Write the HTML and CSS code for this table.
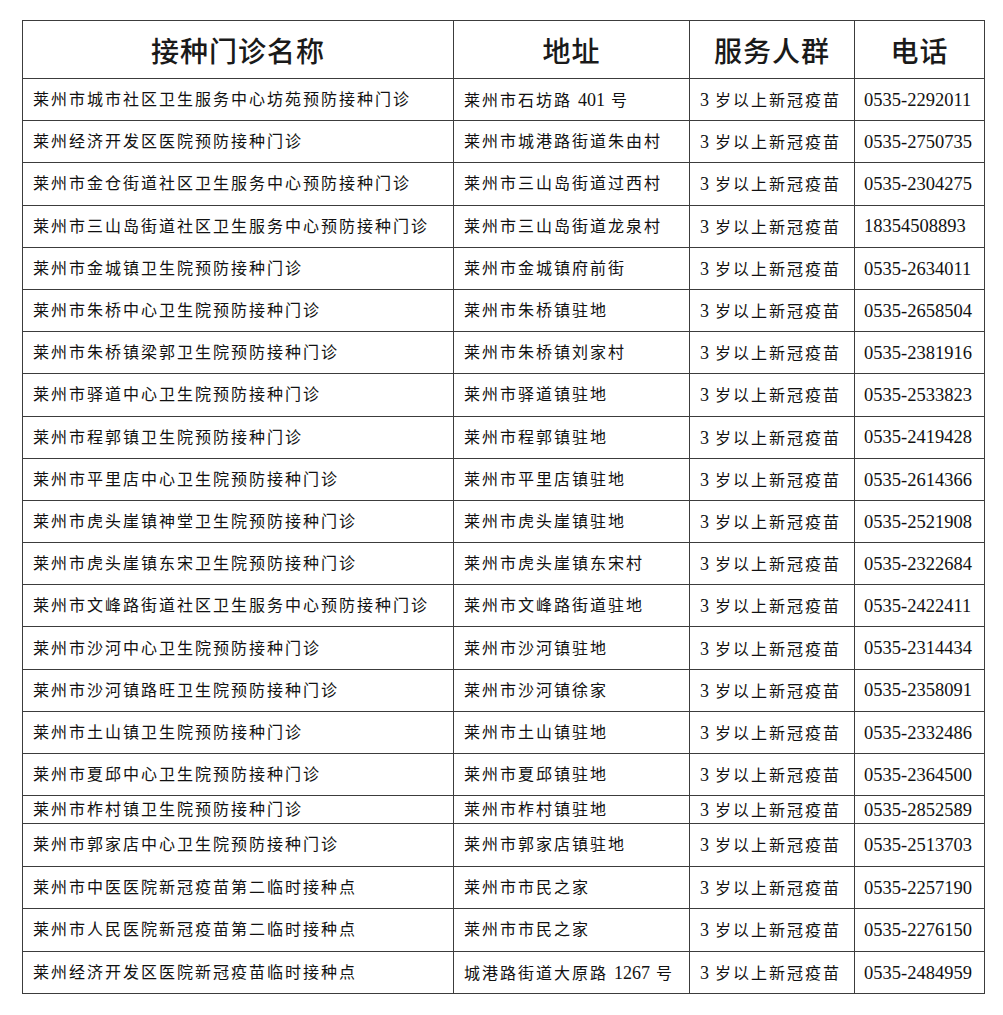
FILE: index.html
```html
<!DOCTYPE html>
<html lang="zh-CN">
<head>
<meta charset="utf-8">
<title>莱州市接种门诊</title>
<link rel="stylesheet" href="styles.css">
</head>
<body>
<table class="sheet">
  <colgroup>
    <col class="c1"><col class="c2"><col class="c3"><col class="c4">
  </colgroup>
  <thead>
    <tr class="head">
      <th>接种门诊名称</th><th>地址</th><th>服务人群</th><th>电话</th>
    </tr>
  </thead>
  <tbody>
    <tr><td>莱州市城市社区卫生服务中心坊苑预防接种门诊</td><td>莱州市石坊路 <span class="n">401</span> 号</td><td><span class="n">3</span> 岁以上新冠疫苗</td><td class="tel">0535-2292011</td></tr>
    <tr><td>莱州经济开发区医院预防接种门诊</td><td>莱州市城港路街道朱由村</td><td><span class="n">3</span> 岁以上新冠疫苗</td><td class="tel">0535-2750735</td></tr>
    <tr><td>莱州市金仓街道社区卫生服务中心预防接种门诊</td><td>莱州市三山岛街道过西村</td><td><span class="n">3</span> 岁以上新冠疫苗</td><td class="tel">0535-2304275</td></tr>
    <tr><td>莱州市三山岛街道社区卫生服务中心预防接种门诊</td><td>莱州市三山岛街道龙泉村</td><td><span class="n">3</span> 岁以上新冠疫苗</td><td class="tel">18354508893</td></tr>
    <tr><td>莱州市金城镇卫生院预防接种门诊</td><td>莱州市金城镇府前街</td><td><span class="n">3</span> 岁以上新冠疫苗</td><td class="tel">0535-2634011</td></tr>
    <tr><td>莱州市朱桥中心卫生院预防接种门诊</td><td>莱州市朱桥镇驻地</td><td><span class="n">3</span> 岁以上新冠疫苗</td><td class="tel">0535-2658504</td></tr>
    <tr><td>莱州市朱桥镇梁郭卫生院预防接种门诊</td><td>莱州市朱桥镇刘家村</td><td><span class="n">3</span> 岁以上新冠疫苗</td><td class="tel">0535-2381916</td></tr>
    <tr><td>莱州市驿道中心卫生院预防接种门诊</td><td>莱州市驿道镇驻地</td><td><span class="n">3</span> 岁以上新冠疫苗</td><td class="tel">0535-2533823</td></tr>
    <tr><td>莱州市程郭镇卫生院预防接种门诊</td><td>莱州市程郭镇驻地</td><td><span class="n">3</span> 岁以上新冠疫苗</td><td class="tel">0535-2419428</td></tr>
    <tr><td>莱州市平里店中心卫生院预防接种门诊</td><td>莱州市平里店镇驻地</td><td><span class="n">3</span> 岁以上新冠疫苗</td><td class="tel">0535-2614366</td></tr>
    <tr><td>莱州市虎头崖镇神堂卫生院预防接种门诊</td><td>莱州市虎头崖镇驻地</td><td><span class="n">3</span> 岁以上新冠疫苗</td><td class="tel">0535-2521908</td></tr>
    <tr><td>莱州市虎头崖镇东宋卫生院预防接种门诊</td><td>莱州市虎头崖镇东宋村</td><td><span class="n">3</span> 岁以上新冠疫苗</td><td class="tel">0535-2322684</td></tr>
    <tr><td>莱州市文峰路街道社区卫生服务中心预防接种门诊</td><td>莱州市文峰路街道驻地</td><td><span class="n">3</span> 岁以上新冠疫苗</td><td class="tel">0535-2422411</td></tr>
    <tr><td>莱州市沙河中心卫生院预防接种门诊</td><td>莱州市沙河镇驻地</td><td><span class="n">3</span> 岁以上新冠疫苗</td><td class="tel">0535-2314434</td></tr>
    <tr><td>莱州市沙河镇路旺卫生院预防接种门诊</td><td>莱州市沙河镇徐家</td><td><span class="n">3</span> 岁以上新冠疫苗</td><td class="tel">0535-2358091</td></tr>
    <tr><td>莱州市土山镇卫生院预防接种门诊</td><td>莱州市土山镇驻地</td><td><span class="n">3</span> 岁以上新冠疫苗</td><td class="tel">0535-2332486</td></tr>
    <tr><td>莱州市夏邱中心卫生院预防接种门诊</td><td>莱州市夏邱镇驻地</td><td><span class="n">3</span> 岁以上新冠疫苗</td><td class="tel">0535-2364500</td></tr>
    <tr class="short"><td>莱州市柞村镇卫生院预防接种门诊</td><td>莱州市柞村镇驻地</td><td><span class="n">3</span> 岁以上新冠疫苗</td><td class="tel">0535-2852589</td></tr>
    <tr class="tall"><td>莱州市郭家店中心卫生院预防接种门诊</td><td>莱州市郭家店镇驻地</td><td><span class="n">3</span> 岁以上新冠疫苗</td><td class="tel">0535-2513703</td></tr>
    <tr class="tall"><td>莱州市中医医院新冠疫苗第二临时接种点</td><td>莱州市市民之家</td><td><span class="n">3</span> 岁以上新冠疫苗</td><td class="tel">0535-2257190</td></tr>
    <tr class="tall"><td>莱州市人民医院新冠疫苗第二临时接种点</td><td>莱州市市民之家</td><td><span class="n">3</span> 岁以上新冠疫苗</td><td class="tel">0535-2276150</td></tr>
    <tr class="tall"><td>莱州经济开发区医院新冠疫苗临时接种点</td><td>城港路街道大原路 <span class="n">1267</span> 号</td><td><span class="n">3</span> 岁以上新冠疫苗</td><td class="tel">0535-2484959</td></tr>
  </tbody>
</table>
</body>
</html>
```

FILE: styles.css
```css
html, body {
  margin: 0;
  padding: 0;
  background: #ffffff;
}

body {
  padding: 20px 0 0 22px;
  font-family: "Liberation Serif", "Noto Sans CJK SC", serif;
  color: #111111;
}

.sheet {
  border-collapse: collapse;
  table-layout: fixed;
  width: 962px;
}

.c1 { width: 431px; }
.c2 { width: 236px; }
.c3 { width: 165px; }
.c4 { width: 130px; }

.sheet th,
.sheet td {
  border: 1px solid #3c3c3c;
  padding: 0 0 0 10px;
  vertical-align: middle;
  white-space: nowrap;
  overflow: hidden;
}

.head {
  height: 58px;
}

.sheet th {
  padding: 0;
  text-align: center;
  font-family: "Noto Sans CJK SC", sans-serif;
  font-size: 28px;
  font-weight: 500;
  line-height: 1;
  letter-spacing: 1px;
  color: #1a1a1a;
}

.sheet tbody tr {
  height: 42.2px;
}

.sheet tbody tr.short {
  height: 28px;
}

.sheet tbody tr.tall {
  height: 42.5px;
}

.sheet td {
  font-size: 16px;
  line-height: 1;
  letter-spacing: 2px;
  text-align: left;
  padding-top: 1px;
}

.n {
  font-family: "Liberation Serif", serif;
  font-size: 18px;
  letter-spacing: 0;
}

.sheet td.tel {
  font-family: "Liberation Serif", serif;
  font-size: 18.5px;
  letter-spacing: 0;
  padding-left: 9px;
}
```
